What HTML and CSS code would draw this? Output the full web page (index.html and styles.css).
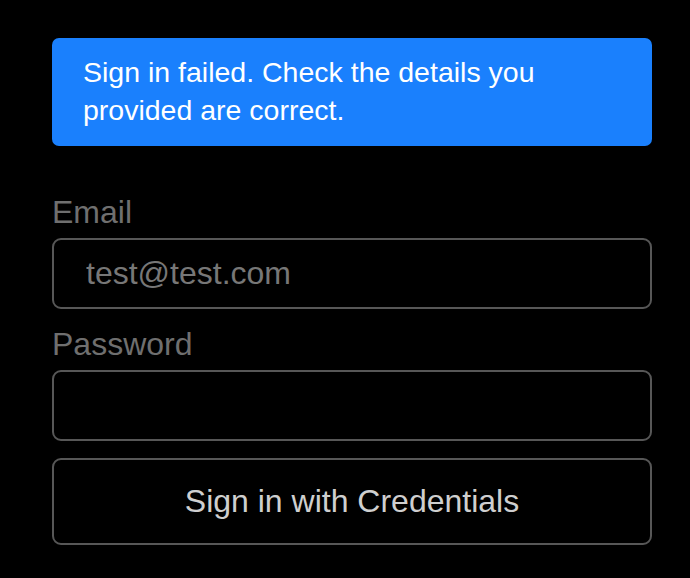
FILE: index.html
```html
<!DOCTYPE html>
<html lang="en">
<head>
<meta charset="utf-8">
<link rel="stylesheet" href="styles.css">
<title>Sign in</title>
</head>
<body>
<main class="page">
  <div class="alert">Sign in failed. Check the details you provided are correct.</div>
  <form class="form">
    <label class="label" for="email">Email</label>
    <input class="input" id="email" type="text" value="test@test.com">
    <label class="label label-pw" for="password">Password</label>
    <input class="input" id="password" type="password">
    <button class="button" type="button">Sign in with Credentials</button>
  </form>
</main>
</body>
</html>
```
FILE: styles.css
```css
html, body {
  margin: 0;
  padding: 0;
  background: #000;
}
body {
  font-family: "Liberation Sans", Arial, sans-serif;
}
.page {
  width: 600px;
  padding: 38px 0 0 52px;
  display: flex;
  flex-direction: column;
}
.alert {
  box-sizing: border-box;
  height: 108px;
  background: #1a80fd;
  color: #fff;
  font-size: 28.5px;
  line-height: 38px;
  padding: 15px 60px 0 31px;
  border-radius: 7px;
}
.form {
  display: flex;
  flex-direction: column;
  margin-top: 48px;
}
.label {
  color: #6f6f6f;
  font-size: 32px;
  line-height: 37px;
  margin-bottom: 7px;
}
.label-pw {
  margin-top: 17px;
}
.input {
  box-sizing: border-box;
  height: 71px;
  width: 600px;
  background: #000;
  border: 2px solid #575757;
  border-radius: 9px;
  color: #777;
  font-family: "Liberation Sans", Arial, sans-serif;
  font-size: 32px;
  padding: 0 32px;
  margin: 0;
  outline: none;
}
.button {
  box-sizing: border-box;
  margin-top: 17px;
  height: 87px;
  width: 600px;
  background: #000;
  border: 2px solid #575757;
  border-radius: 9px;
  color: #cfcfcf;
  font-family: "Liberation Sans", Arial, sans-serif;
  font-size: 32px;
  padding: 0;
}
```
